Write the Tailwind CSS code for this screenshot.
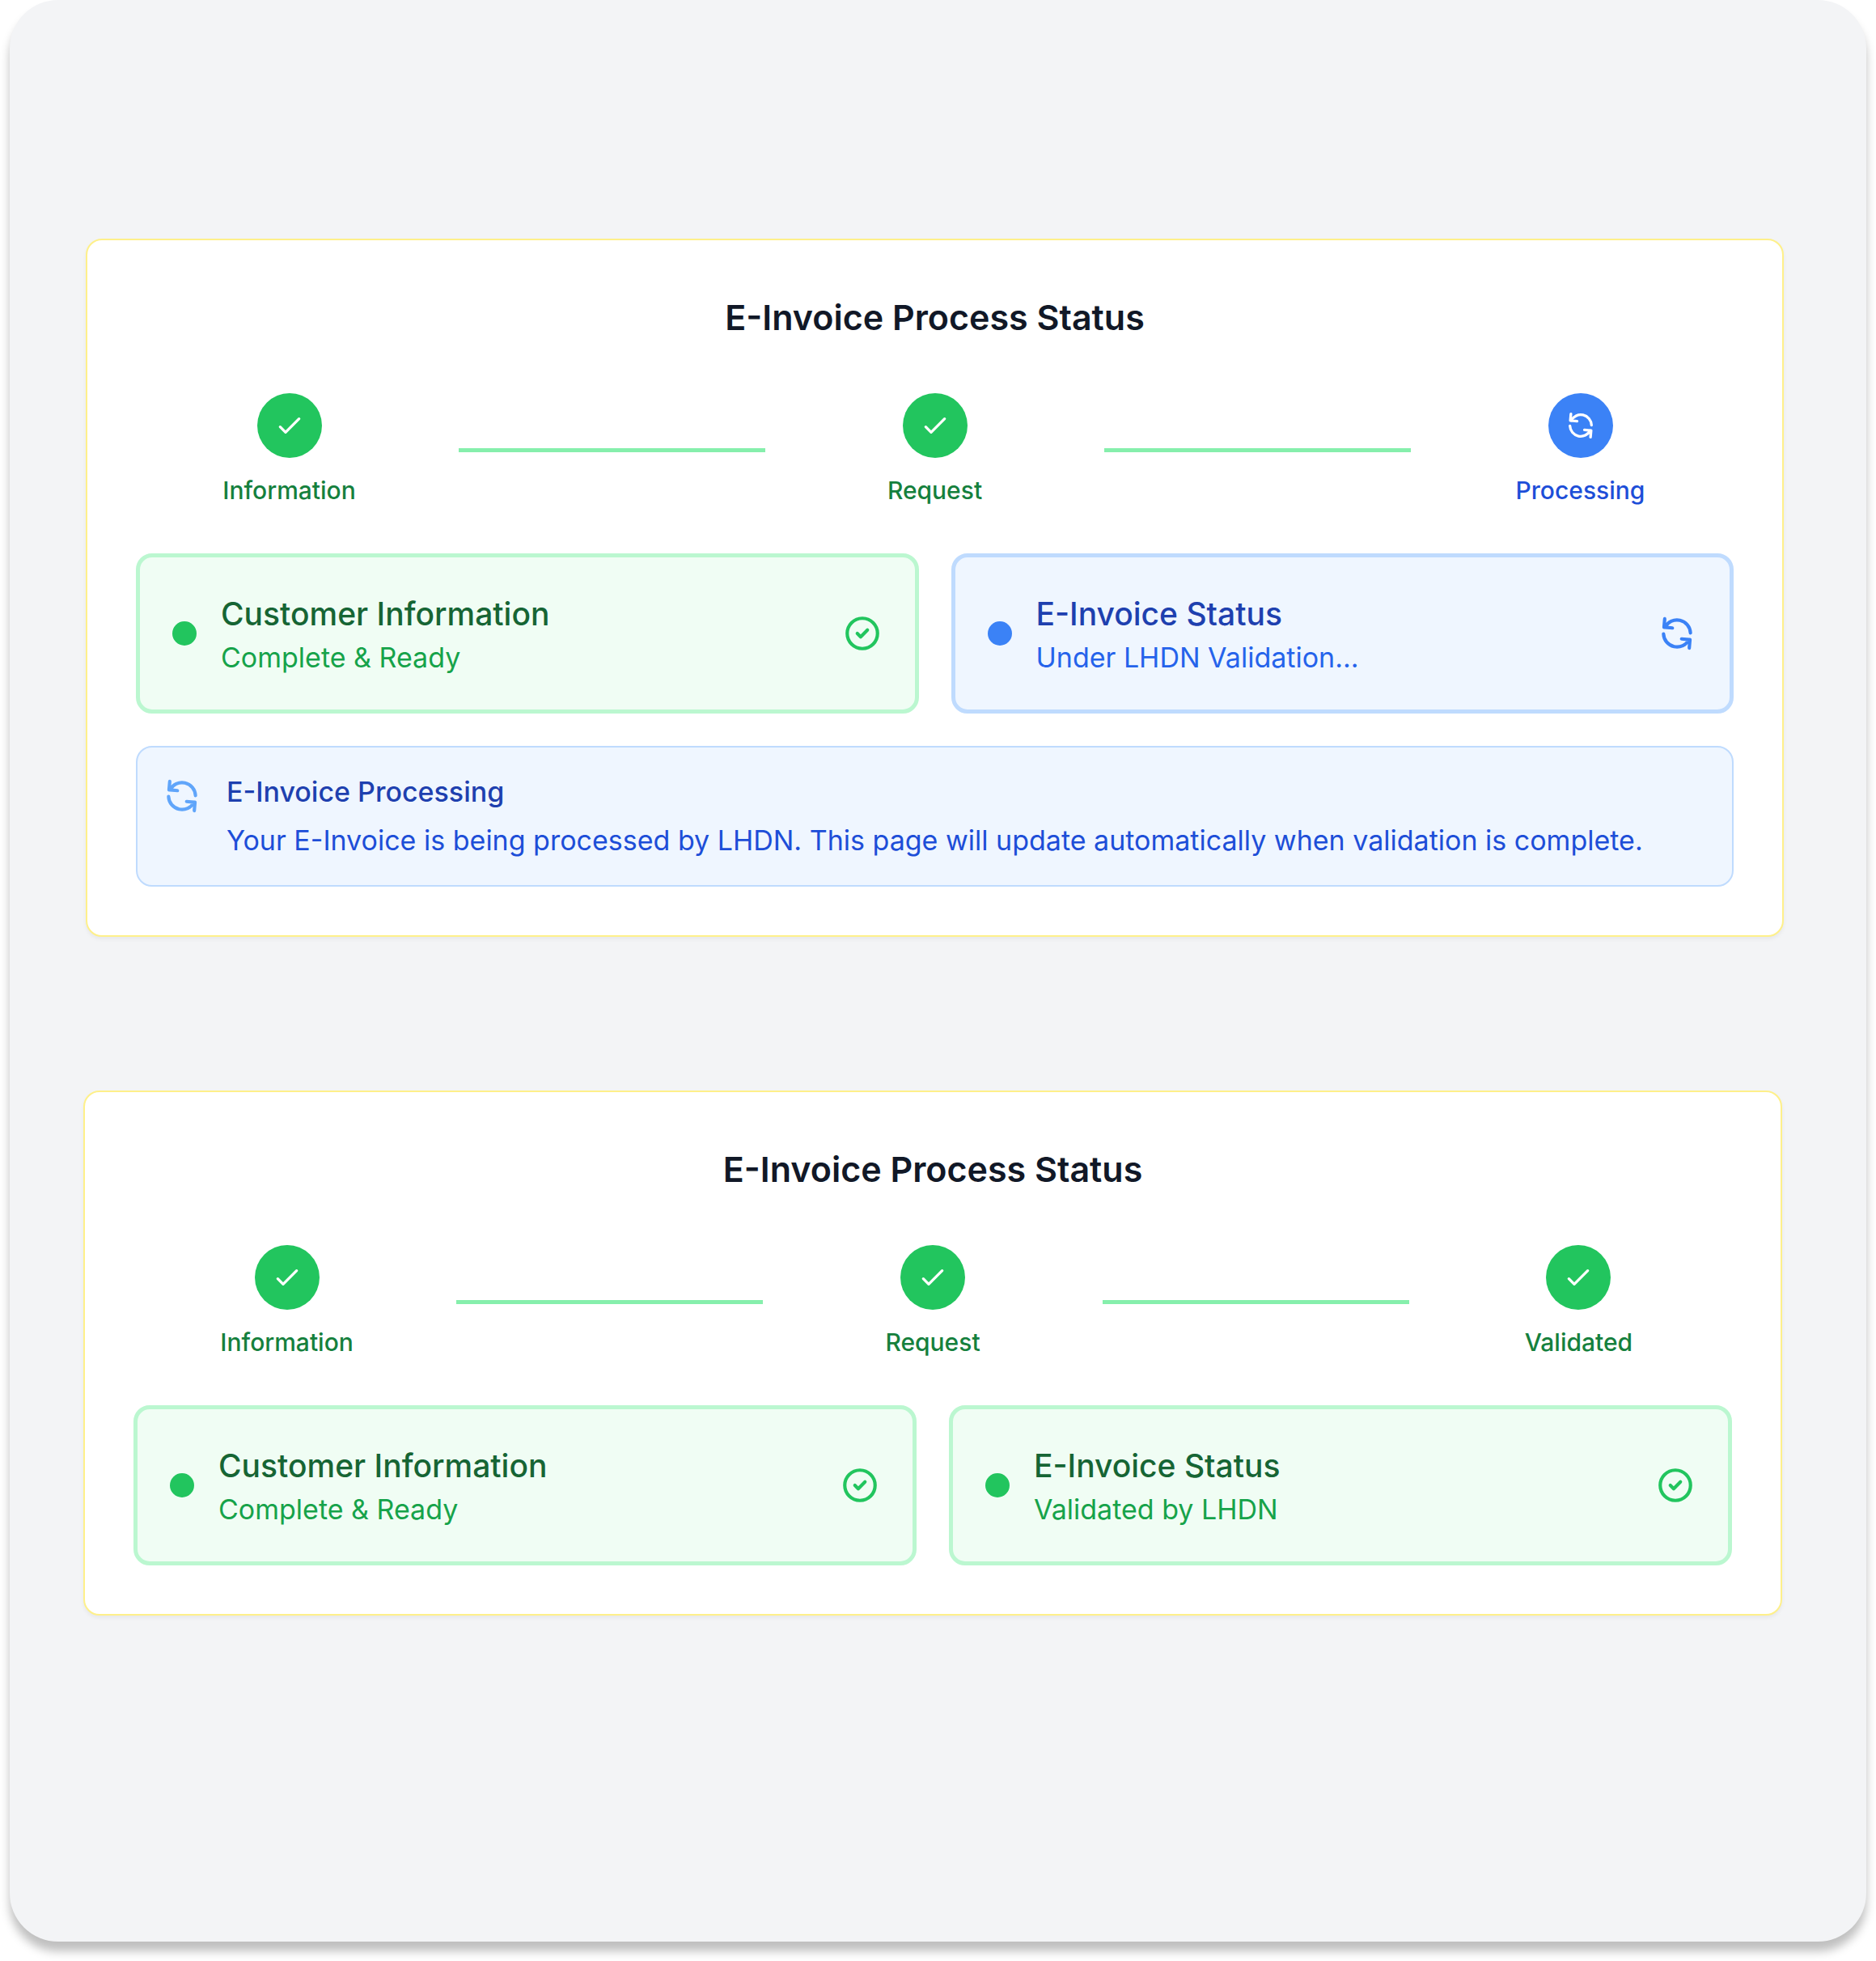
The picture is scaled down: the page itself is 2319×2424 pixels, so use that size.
<!DOCTYPE html>
<html lang="en">
<head>
<meta charset="utf-8">
<meta name="viewport" content="width=device-width, initial-scale=1">
<title>E-Invoice Process Status</title>
<script src="https://cdn.jsdelivr.net/npm/@tailwindcss/browser@4"></script>
</head>
<body class="flex min-h-screen flex-col bg-white px-3 pb-6 font-['Inter','Liberation_Sans',sans-serif] antialiased">
<svg class="hidden" aria-hidden="true">
  <symbol id="check" viewBox="0 0 24 24" fill="none" stroke="currentColor" stroke-width="2" stroke-linecap="round" stroke-linejoin="round"><path d="M5 13l4 4L19 7"/></symbol>
  <symbol id="check-circle" viewBox="0 0 24 24" fill="none" stroke="currentColor" stroke-width="2" stroke-linecap="round" stroke-linejoin="round"><path d="M9 12l2 2 4-4m6 2a9 9 0 11-18 0 9 9 0 0118 0z"/></symbol>
  <symbol id="refresh" viewBox="0 0 24 24" fill="none" stroke="currentColor" stroke-width="2" stroke-linecap="round" stroke-linejoin="round"><path transform="rotate(5 12 12)" d="M4 4v5h.582m15.356 2A8.001 8.001 0 004.582 9m0 0H9m11 11v-5h-.581m0 0a8.003 8.003 0 01-15.357-2m15.357 2H15"/></symbol>
</svg>
<main class="flex flex-1 flex-col gap-[190px] rounded-[60px] bg-[#f3f4f6] pt-[295px] pb-[295px] shadow-[0_12px_12px_rgba(0,0,0,0.25)]">

  <section class="mr-[102px] ml-[94px] rounded-[20px] border-2 border-[#fef08a] bg-white p-[60px] shadow-[0_3px_5px_rgba(0,0,0,0.05)]">
    <h2 class="mb-[59px] text-center text-[43px] leading-[70px] font-semibold text-[#111827]">E-Invoice Process Status</h2>
    <ol class="mb-[58px] grid grid-cols-5 items-center gap-5 text-[30px] leading-[40px] font-medium text-[#15803d]">
      <li class="flex flex-col items-center gap-5">
        <span class="flex size-20 items-center justify-center rounded-full bg-[#22c55e] text-white"><svg class="size-10"><use href="#check"/></svg></span>
        <span>Information</span>
      </li>
      <li class="h-[5px] bg-[#86efac]" aria-hidden="true"></li>
      <li class="flex flex-col items-center gap-5">
        <span class="flex size-20 items-center justify-center rounded-full bg-[#22c55e] text-white"><svg class="size-10"><use href="#check"/></svg></span>
        <span>Request</span>
      </li>
      <li class="h-[5px] bg-[#86efac]" aria-hidden="true"></li>
      <li class="flex flex-col items-center gap-5 text-[#1d4ed8]">
        <span class="flex size-20 items-center justify-center rounded-full bg-[#3b82f6] text-white"><svg class="size-10"><use href="#refresh"/></svg></span>
        <span>Processing</span>
      </li>
    </ol>
    <div class="grid grid-cols-2 gap-10">
      <article class="flex items-center gap-[30px] rounded-[20px] border-5 border-[#bbf7d0] bg-[#f0fdf4] p-10">
        <span class="size-[30px] rounded-full bg-[#22c55e]"></span>
        <div class="flex-1">
          <h3 class="text-[39px] leading-[60px] font-medium text-[#166534]">Customer Information</h3>
          <p class="text-[34px] leading-[48px] text-[#16a34a]">Complete &amp; Ready</p>
        </div>
        <svg class="size-[50px] text-[#22c55e]"><use href="#check-circle"/></svg>
      </article>
      <article class="flex items-center gap-[30px] rounded-[20px] border-5 border-[#bfdbfe] bg-[#eff6ff] p-10">
        <span class="size-[30px] rounded-full bg-[#3b82f6]"></span>
        <div class="flex-1">
          <h3 class="text-[39px] leading-[60px] font-medium text-[#1e40af]">E-Invoice Status</h3>
          <p class="text-[34px] leading-[48px] text-[#2563eb]">Under LHDN Validation...</p>
        </div>
        <svg class="size-[50px] text-[#3b82f6]"><use href="#refresh"/></svg>
      </article>
    </div>
    <aside class="mt-10 flex gap-[30px] rounded-[20px] border-2 border-[#bfdbfe] bg-[#eff6ff] p-[30px]">
      <svg class="mt-[5px] size-[50px] shrink-0 text-[#60a5fa]"><use href="#refresh"/></svg>
      <div class="text-[34px] leading-[50px]">
        <h3 class="mb-[10px] font-medium text-[#1e40af]">E-Invoice Processing</h3>
        <p class="text-[#1d4ed8]">Your E-Invoice is being processed by LHDN. This page will update automatically when validation is complete.</p>
      </div>
    </aside>
  </section>

  <section class="mr-[104px] ml-[91px] rounded-[20px] border-2 border-[#fef08a] bg-white p-[60px] shadow-[0_3px_5px_rgba(0,0,0,0.05)]">
    <h2 class="mb-[59px] text-center text-[43px] leading-[70px] font-semibold text-[#111827]">E-Invoice Process Status</h2>
    <ol class="mb-[58px] grid grid-cols-5 items-center gap-5 text-[30px] leading-[40px] font-medium text-[#15803d]">
      <li class="flex flex-col items-center gap-5">
        <span class="flex size-20 items-center justify-center rounded-full bg-[#22c55e] text-white"><svg class="size-10"><use href="#check"/></svg></span>
        <span>Information</span>
      </li>
      <li class="h-[5px] bg-[#86efac]" aria-hidden="true"></li>
      <li class="flex flex-col items-center gap-5">
        <span class="flex size-20 items-center justify-center rounded-full bg-[#22c55e] text-white"><svg class="size-10"><use href="#check"/></svg></span>
        <span>Request</span>
      </li>
      <li class="h-[5px] bg-[#86efac]" aria-hidden="true"></li>
      <li class="flex flex-col items-center gap-5">
        <span class="flex size-20 items-center justify-center rounded-full bg-[#22c55e] text-white"><svg class="size-10"><use href="#check"/></svg></span>
        <span>Validated</span>
      </li>
    </ol>
    <div class="grid grid-cols-2 gap-10">
      <article class="flex items-center gap-[30px] rounded-[20px] border-5 border-[#bbf7d0] bg-[#f0fdf4] p-10">
        <span class="size-[30px] rounded-full bg-[#22c55e]"></span>
        <div class="flex-1">
          <h3 class="text-[39px] leading-[60px] font-medium text-[#166534]">Customer Information</h3>
          <p class="text-[34px] leading-[48px] text-[#16a34a]">Complete &amp; Ready</p>
        </div>
        <svg class="size-[50px] text-[#22c55e]"><use href="#check-circle"/></svg>
      </article>
      <article class="flex items-center gap-[30px] rounded-[20px] border-5 border-[#bbf7d0] bg-[#f0fdf4] p-10">
        <span class="size-[30px] rounded-full bg-[#22c55e]"></span>
        <div class="flex-1">
          <h3 class="text-[39px] leading-[60px] font-medium text-[#166534]">E-Invoice Status</h3>
          <p class="text-[34px] leading-[48px] text-[#16a34a]">Validated by LHDN</p>
        </div>
        <svg class="size-[50px] text-[#22c55e]"><use href="#check-circle"/></svg>
      </article>
    </div>
  </section>
</main>
</body>
</html>
